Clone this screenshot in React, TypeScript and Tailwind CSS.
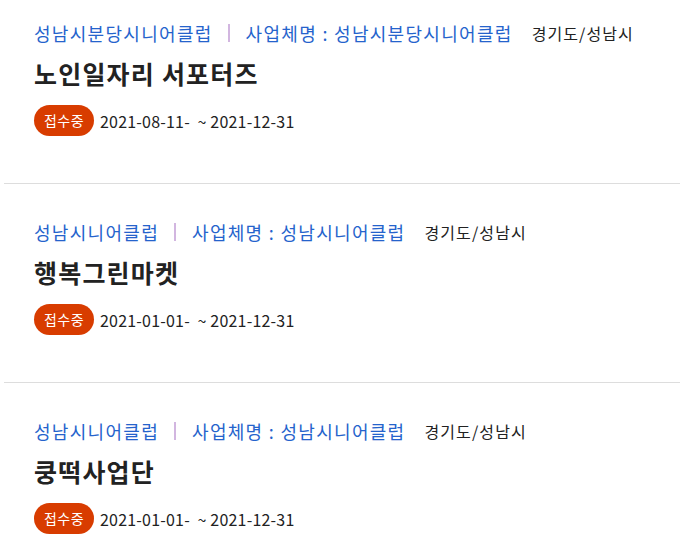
const items = [
  {
    center: "성남시분당시니어클럽",
    company: "성남시분당시니어클럽",
    region: "경기도/성남시",
    title: "노인일자리 서포터즈",
    period: "2021-08-11-  ~ 2021-12-31",
  },
  {
    center: "성남시니어클럽",
    company: "성남시니어클럽",
    region: "경기도/성남시",
    title: "행복그린마켓",
    period: "2021-01-01-  ~ 2021-12-31",
  },
  {
    center: "성남시니어클럽",
    company: "성남시니어클럽",
    region: "경기도/성남시",
    title: "쿵떡사업단",
    period: "2021-01-01-  ~ 2021-12-31",
  },
];

export default function App() {
  return (
    <div
      className="min-h-screen bg-white pl-[4px]"
      style={{ fontFamily: '"Noto Sans CJK KR", "Noto Sans", sans-serif' }}
    >
      <ul>
        {items.map((item, i) => (
          <li
            key={i}
            className={`pl-[30px] pb-[47px] ${i === 0 ? "pt-[20px]" : "pt-[35px]"} ${
              i < items.length - 1 ? "border-b border-[#dddddd]" : ""
            }`}
          >
            {/* Meta line */}
            <div className="flex items-center h-[26px] text-[18px] tracking-[1.3px] text-[#2563cc] whitespace-nowrap">
              <span>{item.center}</span>
              <span className="ml-[15px] mr-[16px] w-[2px] h-[18px] bg-[#d2b6e0]" />
              <span>사업체명 : {item.company}</span>
              <span className="ml-[19px] text-[16px] tracking-[1.1px] text-[#222222]">
                {item.region}
              </span>
            </div>

            {/* Title */}
            <h3 className="mt-[11px] h-[32px] flex items-center text-[25px] tracking-[1.2px] font-bold text-[#222222] leading-none">
              {item.title}
            </h3>

            {/* Status + period */}
            <div className="mt-[16px] flex items-center gap-[6px]">
              <span className="inline-flex items-center justify-center w-[60px] h-[31px] rounded-full bg-[#d83c00] text-white text-[14px] tracking-[0.5px]">
                접수중
              </span>
              <span className="text-[16px] tracking-[0.2px] text-[#222222] whitespace-pre">
                {item.period}
              </span>
            </div>
          </li>
        ))}
      </ul>
    </div>
  );
}
